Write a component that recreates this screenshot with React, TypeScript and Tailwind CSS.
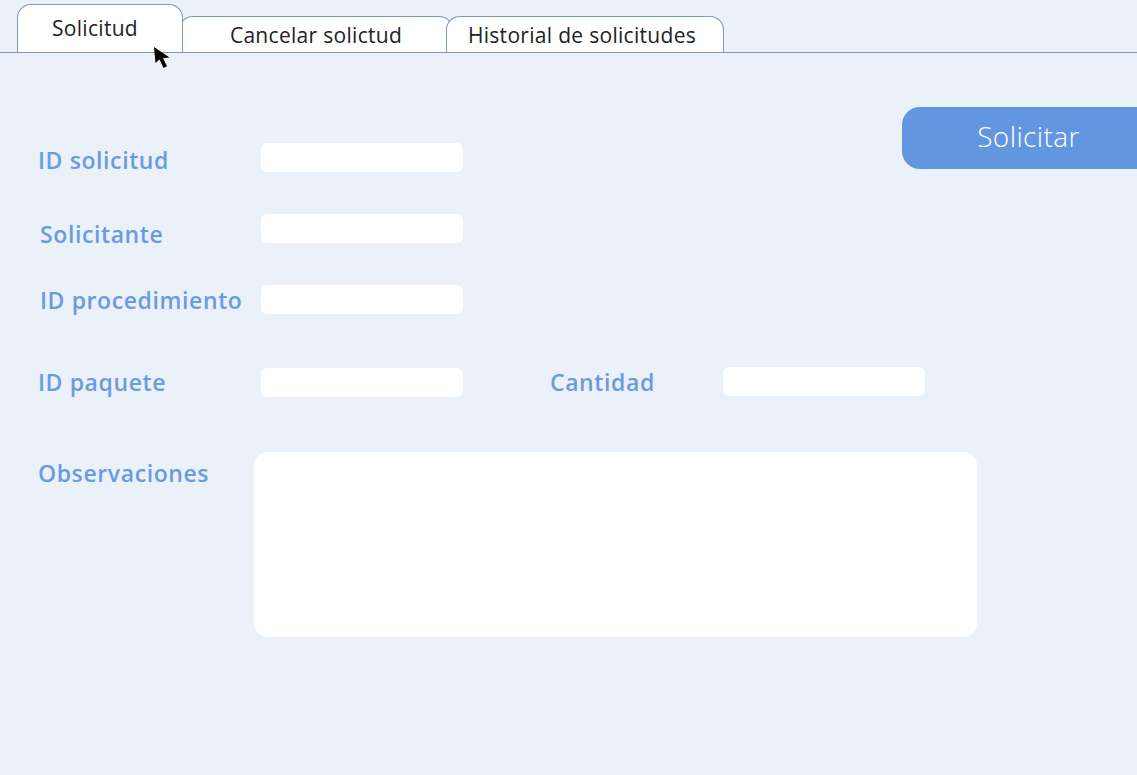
const labelCls = "text-[23px] font-semibold tracking-[0.6px] text-[#6a9be2] leading-none";
const inputCls = "h-[29px] w-[202px] rounded-[6px] bg-white";

function Tab({ label, active, className }: { label: string; active?: boolean; className: string }) {
  return (
    <div
      className={
        "flex items-center justify-center rounded-t-[14px] border border-b-0 border-[#7f9ab5] bg-white text-[21px] tracking-[0.3px] text-[#222] " +
        (active ? "z-10 " : "") +
        className
      }
    >
      {label}
    </div>
  );
}

function Cursor() {
  return (
    <svg className="absolute left-[153px] top-[46px] z-20" width="19" height="24" viewBox="0 0 19 24">
      <path d="M1 1 L2.5 17 L6.5 13.5 L10.5 22 L14 20.2 L10 12.2 L16.5 11.5 Z" fill="#000" />
    </svg>
  );
}

export default function App() {
  return (
    <div className="relative h-[775px] w-full overflow-hidden bg-[#eaf1f8]" style={{ fontFamily: '"Open Sans", "Liberation Sans", sans-serif' }}>
      <div className="flex h-[53px] items-end border-b border-[#7d97b3] pl-[17px]">
        <Tab label="Solicitud" active className="h-[48px] w-[166px] pr-[10px]" />
        <Tab label="Cancelar solictud" className="-ml-[4px] h-[36px] w-[274px] pt-[2px]" />
        <Tab label="Historial de solicitudes" className="-ml-[7px] h-[36px] w-[278px] pr-[6px] pt-[2px]" />
      </div>
      <Cursor />

      <div className="flex flex-col pl-[38px]">
        <div className="flex items-start">
          <div className="mt-[90px] flex h-[29px] items-center">
            <span className={labelCls + " w-[223px] pt-[5px]"}>ID solicitud</span>
            <div className={inputCls} />
          </div>
          <button className="ml-auto mt-[54px] h-[62px] w-[235px] rounded-l-[18px] bg-[#6396e0] pb-[4px] pl-[18px] text-[28px] font-light tracking-[0.4px] text-white">
            Solicitar
          </button>
        </div>

        <div className="mt-[42px] flex h-[29px] items-center">
          <span className={labelCls + " w-[223px] pl-[2px] pt-[12px]"}>Solicitante</span>
          <div className={inputCls} />
        </div>

        <div className="mt-[42px] flex h-[29px] items-center">
          <span className={labelCls + " w-[223px] pl-[2px] pt-[2px]"}>ID procedimiento</span>
          <div className={inputCls} />
        </div>

        <div className="mt-[54px] flex h-[29px] items-center">
          <span className={labelCls + " w-[223px]"}>ID paquete</span>
          <div className={inputCls} />
          <span className={labelCls + " ml-[87px] w-[173px]"}>Cantidad</span>
          <div className={inputCls + " -mt-[2px]"} />
        </div>

        <div className="mt-[55px] flex items-start">
          <span className={labelCls + " mt-[10px] w-[216px]"}>Observaciones</span>
          <div className="h-[185px] w-[723px] rounded-[14px] bg-white" />
        </div>
      </div>
    </div>
  );
}
